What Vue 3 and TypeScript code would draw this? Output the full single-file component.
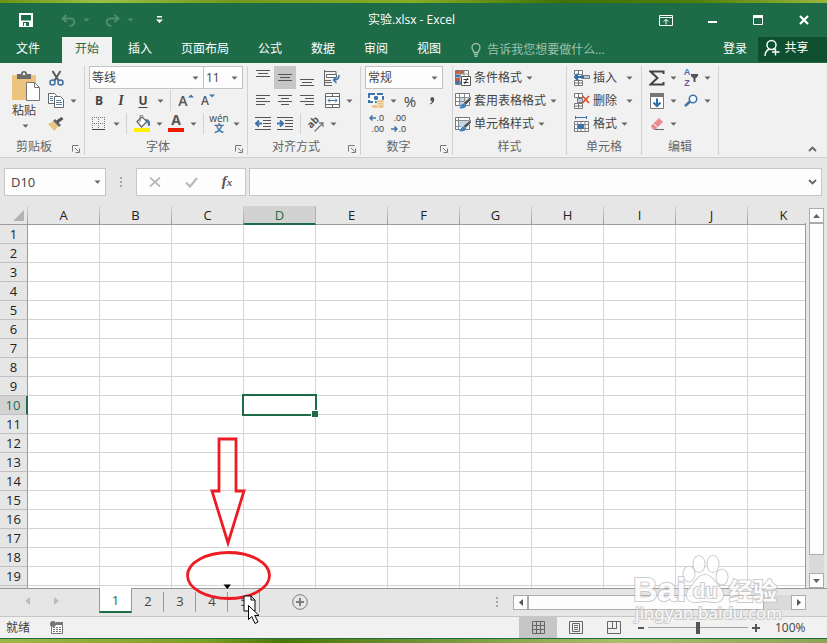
<script setup lang="ts">
import { h, ref } from 'vue'

const Caret = () =>
  h('svg', { class: 'caret', width: 7, height: 4, viewBox: '0 0 7 4', 'aria-hidden': 'true' }, [
    h('path', { d: 'M0.5 0.5h6L3.5 3.8z', fill: 'currentColor' }),
  ])

const Launcher = () =>
  h('svg', { width: 8, height: 8, viewBox: '0 0 8 8', 'aria-hidden': 'true' }, [
    h('path', { d: 'M0.5 6.5v-6h6M3 3l3.5 3.5M7.5 3.5v4h-4', fill: 'none', stroke: '#777' }),
  ])

const ribbonTabs: string[] = ['开始', '插入', '页面布局', '公式', '数据', '审阅', '视图']
const activeTab = ref<string>('开始')

const columns: string[] = ['A', 'B', 'C', 'D', 'E', 'F', 'G', 'H', 'I', 'J', 'K']
const rowCount = 19
const selectedColumn = ref<string>('D')
const selectedRow = ref<number>(10)

function selectCell(col: string, row: number): void {
  selectedColumn.value = col
  selectedRow.value = row
}

const sheets: string[] = ['1', '2', '3', '4', '5']
const activeSheet = ref<string>('1')
const formula = ref<string>('')
const zoom = ref<number>(100)
</script>

<template>
  <div class="desktop">
    <div class="wallpaper top"></div>

    <header class="titlebar">
      <div class="quick">
        <button class="save" aria-label="保存">
          <svg width="14" height="14" viewBox="0 0 14 14">
            <path d="M1 1h12v12H1z" fill="none" stroke="#fff" stroke-width="2" />
            <path d="M1 7.5h12v6H1z" fill="#fff" />
            <path d="M4 9h6v4H4z" fill="#1e6b47" />
            <path d="M5 10h2v3H5z" fill="#fff" />
          </svg>
        </button>
        <button class="undo" aria-label="撤销">
          <svg width="15" height="13" viewBox="0 0 15 13"><path d="M5.5 1L1.5 4.5L5.5 8M2 4.5h7.500c5 0 5.500 7-1 7.500" fill="none" stroke="#4f8d70" stroke-width="2" /></svg>
        </button>
        <button class="drop dim" aria-label="撤销列表"><Caret /></button>
        <button class="redo" aria-label="恢复">
          <svg width="15" height="13" viewBox="0 0 15 13"><path d="M9.500 1l4 3.500l-4 3.500M13 4.500H5.500c-5 0-5.500 7 1 7.500" fill="none" stroke="#4f8d70" stroke-width="2" /></svg>
        </button>
        <button class="drop dim" aria-label="恢复列表"><Caret /></button>
        <button class="customize" aria-label="自定义快速访问工具栏">
          <svg width="7" height="8" viewBox="0 0 7 8"><path d="M1 0h5v1.500H1zM0 3.500h7L3.500 7z" fill="#fff" /></svg>
        </button>
      </div>
      <h1>实验.xlsx - Excel</h1>
      <div class="window-buttons">
        <button aria-label="功能区显示选项">
          <svg width="14" height="11" viewBox="0 0 14 11"><path d="M.5.5h13v10H.5zM.5 2.500h13M7 9.500V4.500M4.500 6.500L7 4.500l2.500 2" fill="none" stroke="#fff" /></svg>
        </button>
        <button aria-label="最小化">
          <svg width="10" height="11" viewBox="0 0 10 11"><path d="M1 6h9v2H1z" fill="#fff" /></svg>
        </button>
        <button aria-label="最大化">
          <svg width="10" height="10" viewBox="0 0 10 10"><path d="M.5.5h9v9h-9z" fill="none" stroke="#fff" /><path d="M0 0h10v3H0z" fill="#fff" /></svg>
        </button>
        <button aria-label="关闭">
          <svg width="10" height="10" viewBox="0 0 10 10"><path d="M1 1l8 8M9 1L1 9" stroke="#fff" stroke-width="2.200" /></svg>
        </button>
      </div>
    </header>

    <nav class="tabs">
      <button class="file">文件</button>
      <div class="tab-list">
        <button v-for="t in ribbonTabs" :key="t" :class="{ active: t === activeTab }" @click="activeTab = t">{{ t }}</button>
      </div>
      <button class="tell-me">
        <svg width="10" height="14" viewBox="0 0 10 14"><path d="M3 9.500C3 8 1 7 1 4.500a4 4 0 0 1 8 0C9 7 7 8 7 9.500zM3 11.500h4M3.500 13.500h3" fill="none" stroke="#9cc3af" stroke-width="1.300" /></svg>
        告诉我您想要做什么...
      </button>
      <button class="login">登录</button>
      <button class="share">
        <svg width="16" height="18" viewBox="0 0 16 18"><circle cx="7.500" cy="6" r="4.500" fill="none" stroke="#fff" stroke-width="1.500" /><path d="M1 17c0-4 2-6 4.500-7M9 10l1.500 1M11.500 9.500v7M8 13h7.500" fill="none" stroke="#fff" stroke-width="1.400" /></svg>
        共享
      </button>
    </nav>

    <section class="ribbon">
      <div class="group clipboard">
        <div class="body">
          <button class="paste">
            <svg width="28" height="30" viewBox="0 0 28 30">
              <path d="M0 4h24v25H0z" fill="#edc47d" />
              <path d="M5 8V3h4a3 3 0 0 1 6 0h4v5z" fill="#6b6b6b" /><circle cx="12" cy="3" r="1.300" fill="#f1f1f1" />
              <path d="M14.500 11.500h8l5 5v13h-13z" fill="#fff" stroke="#777" /><path d="M22.500 11.500v5h5" fill="none" stroke="#777" />
            </svg>
            <span>粘贴</span>
            <Caret />
          </button>
          <div class="rows">
            <div class="row">
              <button class="tool" aria-label="剪切">
                <svg width="15" height="16" viewBox="0 0 15 16"><path d="M3.500 1L9.500 10.500M11.500 1L5.500 10.500" stroke="#595959" stroke-width="2" /><circle cx="3.500" cy="12.500" r="2.500" fill="none" stroke="#3f6f9f" stroke-width="1.500" /><circle cx="11.500" cy="12.500" r="2.500" fill="none" stroke="#3f6f9f" stroke-width="1.500" /></svg>
              </button>
            </div>
            <div class="row">
              <button class="tool" aria-label="复制">
                <svg width="16" height="15" viewBox="0 0 16 15"><path d="M.5.5h6l2 2v8h-8z" fill="#fff" stroke="#666" /><path d="M6.500 3.500h6l3 3v8h-9z" fill="#fff" stroke="#666" /><path d="M2 3.500h3M2 5.500h3M2 7.500h3M8 7.500h5M8 9.500h6M8 11.500h6" stroke="#5b84ad" /></svg>
              </button>
              <button class="drop" aria-label="复制选项"><Caret /></button>
            </div>
            <div class="row">
              <button class="tool" aria-label="格式刷">
                <svg width="16" height="14" viewBox="0 0 16 14"><path d="M0 7l5-2.500l5 5L6.500 14z" fill="#edc47d" /><path d="M5 4l2-2l6 6l-2 2z" fill="#666" /><path d="M9 5l5.500-4" stroke="#555" stroke-width="3" /></svg>
              </button>
            </div>
          </div>
        </div>
        <footer><span>剪贴板</span><button aria-label="剪贴板窗格"><Launcher /></button></footer>
      </div>

      <div class="group font">
        <div class="rows">
          <div class="row">
            <label class="combo family"><select aria-label="字体名称"><option>等线</option></select><Caret /></label>
            <label class="combo size"><select aria-label="字号"><option>11</option></select><Caret /></label>
          </div>
          <div class="row">
            <button class="tool b">B</button>
            <button class="tool i">I</button>
            <button class="tool u">U</button>
            <button class="drop" aria-label="下划线选项"><Caret /></button>
            <i class="sep"></i>
            <button class="tool big-a">A<svg width="6" height="4" viewBox="0 0 6 4"><path d="M0 3.500h6L3 .5z" fill="#3f74ab" /></svg></button>
            <button class="tool small-a">A<svg width="6" height="4" viewBox="0 0 6 4"><path d="M0 .5h6L3 3.500z" fill="#3f74ab" /></svg></button>
          </div>
          <div class="row">
            <button class="tool" aria-label="边框">
              <svg width="14" height="14" viewBox="0 0 14 14"><path d="M.5 0v12M6.500 0v12M12.500 0v12M0 .5h13M0 6.500h13" stroke="#777" stroke-dasharray="1 1" /><path d="M0 12.500h13" stroke="#444" /></svg>
            </button>
            <button class="drop" aria-label="边框选项"><Caret /></button>
            <i class="sep"></i>
            <button class="tool" aria-label="填充颜色">
              <svg width="17" height="17" viewBox="0 0 17 17"><path d="M3 6.500L8 2l5 4.500L7.500 12z" fill="#fff" stroke="#666" stroke-width="1.300" /><path d="M6 7V1.500a1.500 1.500 0 0 1 3 0" fill="none" stroke="#666" /><path d="M11.500 4c4 0 5 3 4.500 6.500l-2 .5C14 8 13 6 11.500 6z" fill="#4177ae" /><path d="M0 13h16v4H0z" fill="#fff100" /></svg>
            </button>
            <button class="drop" aria-label="填充颜色选项"><Caret /></button>
            <button class="tool color-a" aria-label="字体颜色">A</button>
            <button class="drop" aria-label="字体颜色选项"><Caret /></button>
            <i class="sep"></i>
            <button class="tool pinyin"><span>wén</span><b>文</b></button>
            <button class="drop" aria-label="拼音选项"><Caret /></button>
          </div>
        </div>
        <footer><span>字体</span><button aria-label="字体设置"><Launcher /></button></footer>
      </div>

      <div class="group align">
        <div class="rows">
          <div class="row">
            <button class="tool" aria-label="顶端对齐"><svg width="14" height="16" viewBox="0 0 14 16"><path d="M0 .5h14M2 3.500h10M0 6.500h14" stroke="#555" /></svg></button>
            <button class="tool on" aria-label="垂直居中"><svg width="14" height="16" viewBox="0 0 14 16"><path d="M0 4.500h14M2 7.500h10M0 10.500h14" stroke="#555" /></svg></button>
            <button class="tool" aria-label="底端对齐"><svg width="14" height="16" viewBox="0 0 14 16"><path d="M0 9.500h14M2 12.500h10M0 15.500h14" stroke="#555" /></svg></button>
            <button class="tool wide" aria-label="自动换行">
              <svg width="16" height="16" viewBox="0 0 16 16"><path d="M.5 0v16M0 1.500h12v3" fill="none" stroke="#666" /><path d="M2.500 4.500h10v3h-10z" fill="#fff" stroke="#666" /><path d="M0 10.500h7M0 12.500h8M0 15.500h8" stroke="#666" /><path d="M15 5c0 4-2 5-5 5M12.500 7L9.500 10L12.500 13" fill="none" stroke="#3f74ab" stroke-width="1.500" /></svg>
            </button>
          </div>
          <div class="row">
            <button class="tool" aria-label="左对齐"><svg width="14" height="12" viewBox="0 0 14 12"><path d="M0 .5h14M0 3.500h9M0 6.500h14M0 9.500h9" stroke="#555" /></svg></button>
            <button class="tool" aria-label="居中"><svg width="14" height="12" viewBox="0 0 14 12"><path d="M0 .5h14M3 3.500h8M0 6.500h14M3 9.500h8" stroke="#555" /></svg></button>
            <button class="tool" aria-label="右对齐"><svg width="14" height="12" viewBox="0 0 14 12"><path d="M0 .5h14M5 3.500h9M0 6.500h14M5 9.500h9" stroke="#555" /></svg></button>
            <button class="tool wide" aria-label="合并后居中">
              <svg width="15" height="15" viewBox="0 0 15 15"><path d="M.5.5h14v14H.5zM.5 3.500h14M.5 11.500h14M7.500.5v3M7.500 11.500v3" fill="#fff" stroke="#666" /><path d="M3 7.500h9M5 5.500l-2 2l2 2M10 5.500l2 2l-2 2" fill="none" stroke="#3f74ab" /></svg>
            </button>
            <button class="drop" aria-label="合并选项"><Caret /></button>
          </div>
          <div class="row">
            <button class="tool" aria-label="减少缩进"><svg width="16" height="13" viewBox="0 0 16 13"><path d="M0 .5h16M8 3.500h8M8 6.500h8M8 9.500h8M0 12.500h16" stroke="#555" /><path d="M7 6.500H1M4 3.500l-3 3l3 3" fill="none" stroke="#3f74ab" stroke-width="2" /></svg></button>
            <button class="tool" aria-label="增加缩进"><svg width="16" height="13" viewBox="0 0 16 13"><path d="M0 .5h16M8 3.500h8M8 6.500h8M8 9.500h8M0 12.500h16" stroke="#555" /><path d="M0 6.500h6M3 3.500l3 3l-3 3" fill="none" stroke="#3f74ab" stroke-width="2" /></svg></button>
            <i class="sep"></i>
            <button class="tool" aria-label="方向">
              <svg class="orient-icon" width="20" height="20" viewBox="0 0 20 20"><text x="5" y="15" transform="rotate(-45 5 15)" class="orient">ab</text><path d="M8.500 17.500l8-8M13 9h4v4" fill="none" stroke="#777" stroke-width="1.300" /></svg>
            </button>
            <button class="drop" aria-label="方向选项"><Caret /></button>
          </div>
        </div>
        <footer><span>对齐方式</span><button aria-label="对齐设置"><Launcher /></button></footer>
      </div>

      <div class="group number">
        <div class="rows">
          <div class="row">
            <label class="combo format"><select aria-label="数字格式"><option>常规</option></select><Caret /></label>
          </div>
          <div class="row">
            <button class="tool" aria-label="会计数字格式">
              <svg width="17" height="16" viewBox="0 0 17 16"><path d="M1 1h14v8H1z" fill="#fff" stroke="#3f74ab" stroke-width="2" stroke-dasharray="6 2" /><circle cx="8" cy="5" r="2.200" fill="#3f74ab" /><g fill="#e9bd7a" stroke="#fff" stroke-width=".6"><ellipse cx="12.500" cy="8.500" rx="3.800" ry="1.800" /><ellipse cx="12.500" cy="11" rx="3.800" ry="1.800" /><ellipse cx="12.500" cy="13.500" rx="3.800" ry="1.800" /><ellipse cx="7" cy="13.500" rx="3.500" ry="1.800" /></g></svg>
            </button>
            <button class="drop" aria-label="货币选项"><Caret /></button>
            <button class="tool pct">%</button>
            <button class="tool" aria-label="千位分隔样式"><svg width="6" height="8" viewBox="0 0 6 8"><path d="M3 0a2.300 2.300 0 0 1 2.300 2.300C5.300 5 3.500 6.500 1.500 7.500L1 6.500c1-.6 1.800-1.300 2-2.200A2.200 2.200 0 0 1 3 0z" fill="#555" /></svg></button>
          </div>
          <div class="row">
            <button class="tool decimals"><span><svg width="7" height="6" viewBox="0 0 7 6"><path d="M7 3H1M3.500.5L1 3l2.500 2.500" fill="none" stroke="#3f74ab" stroke-width="1.500" /></svg>.0</span><span>.00</span></button>
            <button class="tool decimals"><span>.00</span><span><svg width="7" height="6" viewBox="0 0 7 6"><path d="M0 3h6M3.500.5L6 3L3.500 5.500" fill="none" stroke="#3f74ab" stroke-width="1.500" /></svg>.0</span></button>
          </div>
        </div>
        <footer><span>数字</span><button aria-label="数字设置"><Launcher /></button></footer>
      </div>

      <div class="group styles">
        <div class="rows">
          <div class="row">
            <button class="labeled">
              <svg width="16" height="16" viewBox="0 0 16 16"><path d="M.5.5h13v14H.5z" fill="#fff" stroke="#777" /><path d="M1 1h8v3H1zM1 8h4v3H1z" fill="#c9573a" /><path d="M1 4.500h5v3H1zM1 11h5v3H1z" fill="#3f74ab" /><path d="M5 .5v14M9 .5v6M.5 4h13" stroke="#999" /><path d="M6.500 6.500h9v9h-9z" fill="#fff" stroke="#555" /><path d="M8.500 9.500h5M8.500 12.500h5M12.500 8l-3 6" stroke="#333" /></svg>
              条件格式<Caret />
            </button>
          </div>
          <div class="row">
            <button class="labeled">
              <svg width="16" height="16" viewBox="0 0 16 16"><path d="M.5.5h14v12H.5z" fill="#fff" stroke="#777" /><path d="M5 4h6v8H5z" fill="#c3d6ea" /><path d="M.5 4.500h14M.5 8.500h14M4.500.5v12M9.500.5v12" stroke="#888" /><path d="M16 3v4l-5 5l-3-2z" fill="#555" stroke="#fff" stroke-width=".6" /><path d="M4 15c2-1 2-4 4-4.500c2-.5 4 1 3 3c-1 2-5 2.500-7 1.500z" fill="#3f84c4" /></svg>
              套用表格格式<Caret />
            </button>
          </div>
          <div class="row">
            <button class="labeled">
              <svg width="16" height="16" viewBox="0 0 16 16"><path d="M.5 1.500h14v12H.5z" fill="#fff" stroke="#777" /><path d="M4 5h8v6H4z" fill="#c3d6ea" /><path d="M.5 4.500h14M3.500 1.500v12M.5 10.500h5" stroke="#888" /><path d="M16 3v4l-5 5l-3-2z" fill="#555" stroke="#fff" stroke-width=".6" /><path d="M4 15c2-1 2-4 4-4.500c2-.5 4 1 3 3c-1 2-5 2.500-7 1.500z" fill="#3f84c4" /></svg>
              单元格样式<Caret />
            </button>
          </div>
        </div>
        <footer><span>样式</span></footer>
      </div>

      <div class="group cells">
        <div class="rows">
          <div class="row">
            <button class="labeled spread">
              <svg width="16" height="16" viewBox="0 0 16 16"><path d="M.5.5h8v4h-8zM.5 10.500h8v5h-8zM4.500.5v4M4.500 10.500v5M.5 13h8" fill="#fff" stroke="#777" /><path d="M7.500 5.500h8v3h-8z" fill="#b9cde2" stroke="#777" /><path d="M10 7H1M4 4L1 7l3 3" fill="none" stroke="#2f6cab" stroke-width="2" /></svg>
              插入<Caret />
            </button>
          </div>
          <div class="row">
            <button class="labeled spread">
              <svg width="16" height="16" viewBox="0 0 16 16"><path d="M.5.5h8v4h-8zM.5 10.500h8v5h-8zM4.500.5v4M4.500 10.500v5M.5 13h8" fill="#fff" stroke="#777" /><path d="M3.500 5.500h5v4h-5z" fill="#b9cde2" stroke="#777" /><path d="M8.500 3l6.500 7M15 3L8.500 10" stroke="#d9532c" stroke-width="1.800" /></svg>
              删除<Caret />
            </button>
          </div>
          <div class="row">
            <button class="labeled">
              <svg width="16" height="16" viewBox="0 0 16 16"><path d="M1 1.500h12M1.500 0v3M12.500 0v3" stroke="#3f74ab" /><path d="M.5 5.500h14v10H.5z" fill="#fff" stroke="#777" /><path d="M.5 8.500h14M.5 12.500h14M3.500 5v10M7 5v10M11 5v10" stroke="#888" /><path d="M4 8h6v5H4z" fill="#3f74ab" /></svg>
              格式<Caret />
            </button>
          </div>
        </div>
        <footer><span>单元格</span></footer>
      </div>

      <div class="group editing">
        <div class="rows">
          <div class="row">
            <button class="tool" aria-label="自动求和"><svg width="16" height="16" viewBox="0 0 16 16"><path d="M14.500 4V1.500H1.500L8.500 8L1.500 14.500h13V12" fill="none" stroke="#444" stroke-width="2" /></svg></button>
            <button class="drop" aria-label="求和选项"><Caret /></button>
            <button class="tool sort" aria-label="排序和筛选">
              <span class="az"><b>A</b><b>Z</b></span>
              <svg width="7" height="8" viewBox="0 0 7 8"><path d="M0 0h7v2L4.500 4.500V8h-2V4.500L0 2z" fill="#555" /></svg>
            </button>
            <button class="drop" aria-label="排序选项"><Caret /></button>
          </div>
          <div class="row">
            <button class="tool" aria-label="填充"><svg width="14" height="16" viewBox="0 0 14 16"><path d="M.5.5h13v15H.5z" fill="#fff" stroke="#777" /><path d="M0 0h14v4H0z" fill="#777" /><path d="M7 5.500v8M3.500 9.500L7 13l3.500-3.500" fill="none" stroke="#2f6cab" stroke-width="2" /></svg></button>
            <button class="drop" aria-label="填充选项"><Caret /></button>
            <button class="tool" aria-label="查找和选择"><svg width="14" height="13" viewBox="0 0 14 13"><circle cx="9" cy="5" r="3.700" fill="#fff" stroke="#3f74ab" stroke-width="1.600" /><path d="M6 7.500L1 12" stroke="#3f74ab" stroke-width="2.500" /></svg></button>
            <button class="drop" aria-label="查找选项"><Caret /></button>
          </div>
          <div class="row">
            <button class="tool" aria-label="清除"><svg width="15" height="14" viewBox="0 0 15 14"><path d="M1 9l3-3l4 4l-2.500 2.500H3z" fill="#f4b9bd" /><path d="M1 9l8-8l4 4l-7.500 7.500H3z" fill="#ea8b92" /><path d="M3.500 6.500l4 4" stroke="#fff" /><path d="M5 12.500h9" stroke="#666" /></svg></button>
            <button class="drop" aria-label="清除选项"><Caret /></button>
          </div>
        </div>
        <footer><span>编辑</span></footer>
      </div>

      <button class="collapse" aria-label="折叠功能区"><svg width="9" height="6" viewBox="0 0 9 6"><path d="M1 5l3.500-3.500L8 5" fill="none" stroke="#666" stroke-width="1.800" /></svg></button>
    </section>

    <section class="formula-bar">
      <label class="combo name-box"><select aria-label="名称框"><option>{{ selectedColumn }}{{ selectedRow }}</option></select><Caret /></label>
      <svg class="grip" width="2" height="10" viewBox="0 0 2 10"><path d="M0 0h2v2H0zM0 4h2v2H0zM0 8h2v2H0z" fill="#a6a6a6" /></svg>
      <div class="entry-buttons">
        <button aria-label="取消"><svg width="12" height="10" viewBox="0 0 12 10"><path d="M1 0.500l10 9M11 0.500L1 9.500" stroke="#b9b9b9" stroke-width="1.800" /></svg></button>
        <button aria-label="输入"><svg width="13" height="11" viewBox="0 0 13 11"><path d="M1 5.500l4 4L12 1" fill="none" stroke="#b9b9b9" stroke-width="2.200" /></svg></button>
        <button class="fx"><span>f</span><small>x</small></button>
      </div>
      <label class="formula">
        <input v-model="formula" type="text" aria-label="编辑栏" />
        <svg width="9" height="6" viewBox="0 0 9 6"><path d="M1 1l3.500 3.500L8 1" fill="none" stroke="#666" stroke-width="1.800" /></svg>
      </label>
    </section>

    <main class="sheet-area">
      <div class="grid-wrap">
        <table>
          <thead>
            <tr>
              <th class="corner"><svg width="12" height="11" viewBox="0 0 12 11"><path d="M11 0v11H0z" fill="#b4b4b4" /></svg></th>
              <th v-for="c in columns" :key="c" scope="col" :class="{ picked: c === selectedColumn }">{{ c }}</th>
            </tr>
          </thead>
          <tbody>
            <tr v-for="r in rowCount" :key="r">
              <th scope="row" :class="{ picked: r === selectedRow }">{{ r }}</th>
              <td v-for="c in columns" :key="c" @click="selectCell(c, r)">
                <div v-if="c === selectedColumn && r === selectedRow" class="cursor-cell"></div>
              </td>
            </tr>
            <tr>
              <th></th>
              <td v-for="c in columns" :key="c"></td>
            </tr>
          </tbody>
        </table>
      </div>
      <div class="vscroll">
        <button aria-label="向上滚动"><svg width="7" height="4" viewBox="0 0 7 4"><path d="M0 4h7L3.500 0z" fill="#666" /></svg></button>
        <div class="thumb"></div>
        <div class="track"></div>
        <button aria-label="向下滚动"><svg width="7" height="4" viewBox="0 0 7 4"><path d="M0 0h7L3.500 4z" fill="#666" /></svg></button>
      </div>
    </main>

    <section class="sheet-bar">
      <div class="sheet-nav">
        <button aria-label="上一个工作表"><svg width="5" height="8" viewBox="0 0 5 8"><path d="M5 0v8L0 4z" fill="#bcbcbc" /></svg></button>
        <button aria-label="下一个工作表"><svg width="5" height="8" viewBox="0 0 5 8"><path d="M0 0v8l5-4z" fill="#bcbcbc" /></svg></button>
      </div>
      <div class="sheet-tabs">
        <button v-for="s in sheets" :key="s" :class="{ active: s === activeSheet }" @click="activeSheet = s">{{ s }}</button>
      </div>
      <button class="add" aria-label="新工作表"><svg width="16" height="16" viewBox="0 0 16 16"><circle cx="8" cy="8" r="7.300" fill="none" stroke="#7d7d7d" /><path d="M8 4v8M4 8h8" stroke="#7d7d7d" stroke-width="2" /></svg></button>
      <svg class="grip" width="2" height="10" viewBox="0 0 2 10"><path d="M0 0h2v2H0zM0 4h2v2H0zM0 8h2v2H0z" fill="#a6a6a6" /></svg>
      <div class="hscroll">
        <button aria-label="向左滚动"><svg width="4" height="7" viewBox="0 0 4 7"><path d="M4 0v7L0 3.500z" fill="#555" /></svg></button>
        <div class="thumb"></div>
        <div class="track"></div>
        <button aria-label="向右滚动"><svg width="4" height="7" viewBox="0 0 4 7"><path d="M0 0v7l4-3.500z" fill="#555" /></svg></button>
      </div>
    </section>

    <footer class="status">
      <span class="ready">就绪</span>
      <button class="macro" aria-label="录制宏">
        <svg width="13" height="13" viewBox="0 0 13 13"><path d="M1.500 3.500h11v9h-11z" fill="#fff" stroke="#777" /><path d="M6 1h7v3H6z" fill="#777" /><path d="M3 6.500h8M3 8.500h8M3 10.500h8" stroke="#777" stroke-dasharray="2 1" /><circle cx="3" cy="3" r="3" fill="#777" /></svg>
      </button>
      <div class="views">
        <button class="on" aria-label="普通"><svg width="13" height="13" viewBox="0 0 13 13"><path d="M.5.5h12v12H.5zM4.500 0v13M8.500 0v13M0 4.500h13M0 8.500h13" fill="none" stroke="#666" /></svg></button>
        <button aria-label="页面布局"><svg width="14" height="13" viewBox="0 0 14 13"><path d="M.5.5h13v12H.5zM3.500 2.500h7v8h-7zM5 4.500h4M5 6.500h4M5 8.500h4" fill="none" stroke="#666" /></svg></button>
        <button aria-label="分页预览"><svg width="14" height="13" viewBox="0 0 14 13"><path d="M.5.500h13v12H.5zM5.500.500v7M9.500.500v7M0 7.500h10" fill="none" stroke="#666" /></svg></button>
      </div>
      <div class="zoom">
        <button aria-label="缩小"><svg width="6" height="8" viewBox="0 0 6 8"><path d="M0 3h6v2H0z" fill="#555" /></svg></button>
        <input v-model.number="zoom" type="range" min="0" max="200" aria-label="显示比例" />
        <button aria-label="放大"><svg width="8" height="8" viewBox="0 0 8 8"><path d="M3 0h2v8H3zM0 3h8v2H0z" fill="#555" /></svg></button>
        <span>{{ zoom }}%</span>
      </div>
    </footer>
    <div class="wallpaper bottom"></div>

    <svg class="callout" width="90" height="190" viewBox="0 0 90 190" aria-hidden="true">
      <path d="M34 3h17v52h8L43 107L27 55h7z" fill="none" stroke="#ed1c24" stroke-width="2.800" />
      <ellipse cx="43.500" cy="139.500" rx="41" ry="23" fill="none" stroke="#ed1c24" stroke-width="2.800" />
      <path d="M38.500 148.500h7.500L42.300 153z" fill="#000" />
      <path d="M59 160h7l4 4v11H59z" fill="#fff" stroke="#000" /><path d="M66 160v4h4" fill="none" stroke="#000" />
      <path d="M63.500 169.500v14l3.300-3l3.200 7l3-1.500l-3.200-6.500h4.200z" fill="#fff" stroke="#000" />
    </svg>

    <svg class="watermark" width="152" height="76" viewBox="0 0 152 76" aria-hidden="true">
      <g>
        <ellipse cx="58" cy="24" rx="5.500" ry="7.500" /><ellipse cx="68" cy="14" rx="5.500" ry="8" /><ellipse cx="82" cy="14" rx="5.500" ry="8" /><ellipse cx="91" cy="27" rx="5.500" ry="7.500" />
        <path d="M74 25c7 0 10 8 15 13c6 6 3 14-5 14c-5 0-7-1-10-1s-6 1-10 1c-8 0-11-8-5-14c5-5 8-13 15-13z" />
        <text x="2" y="51" class="wm-logo">Bai</text>
        <text x="62" y="48" class="wm-du">du</text>
        <text x="98" y="50" class="wm-cn">经验</text>
        <text x="4" y="69" class="wm-url">jingyan.baidu.com</text>
      </g>
    </svg>
  </div>
</template>

<style>
body {
  margin: 0;
}
</style>

<style scoped>
.desktop {
  position: relative;
  display: flex;
  flex-direction: column;
  height: 100vh;
  overflow: hidden;
  background: #e6e6e6;
  color: #444;
  font: 12px/16px "Open Sans", "Noto Sans CJK SC", sans-serif;
}
* {
  box-sizing: border-box;
}
svg {
  display: block;
  flex: none;
}
button {
  display: flex;
  align-items: center;
  justify-content: center;
  flex: none;
  margin: 0;
  padding: 0;
  border: 0;
  background: none;
  color: inherit;
  font: inherit;
  white-space: nowrap;
}
.wallpaper {
  flex: none;
}
.wallpaper.top {
  height: 3px;
  background: linear-gradient(90deg, #6a9414, #9cc043 12%, #6f9a1c 28%, #86ad25 50%, #417203 68%, #4f7f08 84%, #9ab83c);
}
.wallpaper.bottom {
  height: 5px;
  border-top: 1px solid #1e6b47;
  background: linear-gradient(90deg, #9bb94a, #7c9f25 25%, #4c7706 34%, #6d9130 50%, #a9bf6a 75%, #8aa556);
}

.titlebar {
  display: grid;
  grid-template-columns: 1fr auto 1fr;
  align-items: center;
  flex: none;
  height: 34px;
  background: #1e6b47;
  color: #fff;
}
.titlebar h1 {
  margin: 0;
  padding-right: 4px;
  font-size: 12px;
  font-weight: 400;
}
.quick {
  display: flex;
  align-items: center;
  padding-left: 12px;
}
.quick .save {
  width: 28px;
  margin-right: 16px;
}
.undo,
.redo {
  width: 24px;
}
.quick .dim {
  margin-right: 8px;
  color: #4f8d70;
}
.customize {
  width: 20px;
  margin-left: 5px;
}
.window-buttons {
  display: flex;
  justify-content: flex-end;
}
.window-buttons button {
  width: 46px;
  height: 32px;
}

.tabs {
  display: flex;
  align-items: stretch;
  flex: none;
  height: 26px;
  background: #1e6b47;
  color: #fff;
}
.tabs button {
  padding-bottom: 3px;
}
.tabs .file {
  padding-left: 16px;
  padding-right: 22px;
}
.tab-list {
  display: flex;
  gap: 3px;
}
.tab-list button {
  padding-left: 13px;
  padding-right: 13px;
}
.tab-list .active {
  background: #f1f1f1;
  color: #1e6b47;
}
.tabs .tell-me {
  gap: 6px;
  margin-left: 17px;
  padding-bottom: 1px;
  color: #9cc3af;
}
.tabs .login {
  margin-left: auto;
  padding-right: 11px;
}
.tabs .share {
  gap: 4px;
  width: 69px;
  padding-right: 12px;
  margin-bottom: 1px;
  background: #0e4f30;
}

.ribbon {
  display: flex;
  flex: none;
  height: 95px;
  background: #f1f1f1;
  border-bottom: 1px solid #cfcfcf;
}
.group {
  display: flex;
  flex-direction: column;
  flex: none;
  padding-top: 3px;
  border-right: 1px solid;
  border-image: linear-gradient(#f1f1f1 4px, #d2d2d2 4px, #d2d2d2 91px, #f1f1f1 91px) 1;
}
.group footer {
  display: flex;
  align-items: center;
  height: 22px;
  padding-top: 2px;
  color: #666;
}
.group footer span {
  flex: 1;
  text-align: center;
}
.group footer button {
  width: 16px;
  padding-top: 4px;
}
.body {
  display: flex;
}
.rows {
  display: flex;
  flex-direction: column;
}
.row {
  display: flex;
  align-items: center;
  height: 23px;
}
.tool {
  width: 22px;
  height: 23px;
}
.drop {
  width: 12px;
  height: 20px;
}
.caret {
  color: #666;
}
.dim .caret {
  color: inherit;
}
.sep {
  width: 1px;
  height: 21px;
  margin: 0 4px;
  background: #d2d2d2;
}
.on {
  background: #c6c6c6;
}
.clipboard {
  width: 85px;
}
.paste {
  flex-direction: column;
  justify-content: flex-start;
  align-items: flex-start;
  width: 33px;
  margin-left: 12px;
  padding-top: 5px;
}
.paste span {
  margin-top: 2px;
}
.paste .caret {
  margin: 5px 0 0 10px;
}
.font {
  width: 163px;
}
.font .rows {
  padding-left: 3px;
}
.align {
  width: 113px;
}
.align .rows {
  padding-left: 4px;
}
.number {
  width: 92px;
}
.number .rows {
  padding-left: 4px;
}
.styles {
  width: 114px;
}
.styles .rows {
  padding-left: 2px;
}
.cells {
  width: 75px;
}
.cells .rows {
  padding-left: 7px;
}
.editing {
  width: 77px;
}
.editing .rows {
  padding-left: 5px;
}
.editing .tool {
  width: 20px;
}
.editing .drop {
  margin-right: 2px;
}
.wide {
  margin-left: 3px;
}

.combo {
  display: grid;
  align-items: center;
  height: 23px;
  border: 1px solid #c3c3c3;
  background: #fdfdfd;
}
.combo select {
  grid-area: 1 / 1;
  width: 100%;
  height: 100%;
  padding: 0 14px 0 2px;
  border: 0;
  background: none;
  appearance: none;
  color: #444;
  font: inherit;
}
.combo .caret {
  grid-area: 1 / 1;
  justify-self: end;
  margin-right: 4px;
  pointer-events: none;
}
.family {
  width: 115px;
  margin-left: 1px;
}
.size {
  width: 40px;
  margin-left: -1px;
}
.format {
  width: 78px;
}
.b {
  font-weight: 700;
}
.i {
  font: italic 700 14px/16px "Liberation Serif", serif;
}
.u {
  font-weight: 700;
  text-decoration: underline;
  text-underline-offset: 2px;
}
.big-a,
.small-a {
  align-items: center;
  font-weight: 600;
  color: #555;
}
.big-a {
  font-size: 14px;
}
.small-a {
  font-size: 12px;
}
.big-a svg,
.small-a svg {
  margin-bottom: 10px;
}
.color-a {
  align-self: flex-start;
  height: 20px;
  width: 16px;
  margin: 0 3px;
  border-bottom: 4px solid #f21b00;
  font-size: 14px;
  font-weight: 700;
  color: #555;
}
.pinyin {
  flex-direction: column;
  font-size: 10px;
  line-height: 9px;
}
.pinyin b {
  font-size: 10px;
  line-height: 10px;
  color: #3f74ab;
}
.orient-icon {
  overflow: visible;
}
.orient {
  fill: #555;
  font: 700 10px "Open Sans", sans-serif;
}
.pct {
  font-size: 15px;
}
.decimals {
  flex-direction: column;
  align-items: flex-end;
  padding-right: 3px;
  font: 9px/11px "Liberation Sans", sans-serif;
}
.decimals span {
  display: flex;
  align-items: center;
}
.labeled {
  gap: 3px;
  height: 23px;
}
.styles .caret,
.cells .caret {
  margin-left: 1px;
}
.cells .spread .caret {
  margin-left: 6px;
}
.az {
  display: flex;
  flex-direction: column;
  font: 9px/11px "Liberation Sans", sans-serif;
  color: #3f74ab;
}
.az b + b {
  color: #7c4ba0;
}
.sort {
  gap: 1px;
}
.collapse {
  align-self: flex-end;
  margin: 0 10px 5px auto;
}

.formula-bar {
  display: flex;
  align-items: center;
  flex: none;
  height: 48px;
  padding: 0 5px 0 4px;
}
.formula-bar > label,
.entry-buttons {
  height: 28px;
  border: 1px solid #c6c6c6;
  background: #fdfdfd;
}
.name-box {
  width: 102px;
}
.name-box select {
  padding-left: 6px;
  font-size: 13px;
}
.formula-bar .grip {
  margin: 0 14px 0 14px;
}
.entry-buttons {
  display: flex;
  width: 110px;
  margin: 0 3px 0 0;
}
.entry-buttons button {
  flex: 1;
}
.fx {
  align-items: baseline;
  font: italic 700 15px/24px "Liberation Serif", serif;
  color: #555;
}
.fx small {
  font-size: 11px;
}
.formula {
  display: flex;
  align-items: center;
  flex: 1;
  min-width: 0;
}
.formula input {
  flex: 1;
  min-width: 0;
  height: 100%;
  padding: 0 6px;
  border: 0;
  outline: 0;
  background: none;
  font: inherit;
}
.formula svg {
  margin: 0 4px;
}

.sheet-area {
  display: flex;
  flex: 1;
  min-height: 0;
}
.grid-wrap {
  flex: 1;
  min-width: 0;
  overflow: hidden;
  border-right: 1px solid;
  border-image: linear-gradient(#e6e6e6 18px, #999 18px) 1;
}
table {
  width: 820px;
  table-layout: fixed;
  border-spacing: 0;
  font-size: 13px;
  line-height: 16px;
  color: #222;
}
th,
td {
  padding: 0;
  height: 19px;
  overflow: hidden;
}
th {
  font-weight: 400;
  text-align: center;
}
thead th {
  width: 72px;
  border-right: 1px solid;
  border-bottom: 1px solid;
  border-image: linear-gradient(#d5d5d5, #999) 1;
  background: #e6e6e6;
}
thead .corner {
  width: 28px;
}
.corner svg {
  margin-left: 13px;
}
tbody th {
  border-right: 1px solid #999;
  border-bottom: 1px solid #c0c0c0;
  background: #e6e6e6;
}
td {
  position: relative;
  overflow: visible;
  border-right: 1px solid #d4d4d4;
  border-bottom: 1px solid #d4d4d4;
  background: #fff;
}
thead .picked {
  border-image: none;
  border-color: #b0b0b0;
  border-bottom: 2px solid #1e6b47;
  background: #d2d2d2;
  color: #1e6b47;
}
tbody .picked {
  border-right: 2px solid #1e6b47;
  background: #d2d2d2;
  color: #1e6b47;
}
.cursor-cell {
  position: absolute;
  inset: -2px;
  z-index: 1;
  border: 2px solid #1e6b47;
}
.cursor-cell::after {
  content: "";
  position: absolute;
  right: -3px;
  bottom: -3px;
  width: 6px;
  height: 6px;
  border: 1px solid #fff;
  border-width: 1px 0 0 1px;
  background: #1e6b47;
}
.vscroll {
  display: flex;
  flex-direction: column;
  width: 15px;
  margin: 2px 3px 0;
  background: #dadada;
}
.vscroll button,
.hscroll button,
.thumb {
  border: 1px solid #ababab;
  background: #fdfdfd;
}
.vscroll button {
  height: 15px;
}
.vscroll .thumb {
  flex: 333;
}
.vscroll .track {
  flex: 18;
}

.sheet-bar {
  display: flex;
  flex: none;
  height: 29px;
  border-top: 1px solid #999;
  border-bottom: 1px solid #c6c6c6;
  font-size: 13px;
}
.sheet-nav {
  display: flex;
  width: 99px;
  padding: 0 28px 3px 13px;
}
.sheet-nav button {
  flex: 1;
}
.sheet-tabs {
  display: flex;
  height: 24px;
}
.sheet-tabs button {
  width: 32px;
  background: linear-gradient(#999, #999) right 3px / 1px 20px no-repeat;
}
.sheet-tabs .active {
  width: 33px;
  margin-top: -1px;
  border: solid #999;
  border-width: 0 1px;
  border-bottom: 2px solid #1e6b47;
  background: #fff;
  color: #1e6b47;
}
.add {
  margin: 0 auto 2px 32px;
}
.sheet-bar .grip {
  margin: 8px 15px 0 0;
}
.hscroll {
  display: flex;
  flex: 0 1 293px;
  height: 15px;
  margin: 6px 21px 0 0;
  background: #dadada;
}
.hscroll button {
  width: 15px;
}
.hscroll .thumb {
  flex: 236;
}
.hscroll .track {
  flex: 27;
}

.status {
  display: flex;
  align-items: center;
  flex: none;
  height: 21px;
  padding-left: 6px;
  background: #f1f1f1;
}
.macro {
  margin: 0 auto 0 20px;
}
.views {
  display: flex;
  height: 21px;
}
.views button {
  width: 38px;
}
.zoom {
  display: flex;
  align-items: center;
  width: 194px;
  padding-left: 5px;
}
.zoom span {
  margin-left: 15px;
}
.zoom input {
  width: 100px;
  height: 12px;
  margin: 0 4px;
  appearance: none;
  background: linear-gradient(#a0a0a0, #a0a0a0) center / 100% 1px no-repeat;
}
.zoom input::-webkit-slider-thumb {
  appearance: none;
  width: 4px;
  height: 12px;
  background: #555;
}

.callout {
  position: absolute;
  left: 185px;
  bottom: 17px;
  pointer-events: none;
}
.watermark {
  position: absolute;
  right: 44px;
  bottom: 17px;
  pointer-events: none;
}
.watermark g {
  fill: #fff;
  stroke: #c4c4c4;
  stroke-width: 2px;
  paint-order: stroke;
  opacity: 0.85;
}
.wm-logo {
  font: 700 34px "Liberation Sans", sans-serif;
}
.wm-du {
  font: 700 20px "Liberation Sans", sans-serif;
}
.wm-cn {
  font: 700 24px "Noto Sans CJK SC", sans-serif;
}
.wm-url {
  font: 17px "Noto Sans", sans-serif;
}
</style>
